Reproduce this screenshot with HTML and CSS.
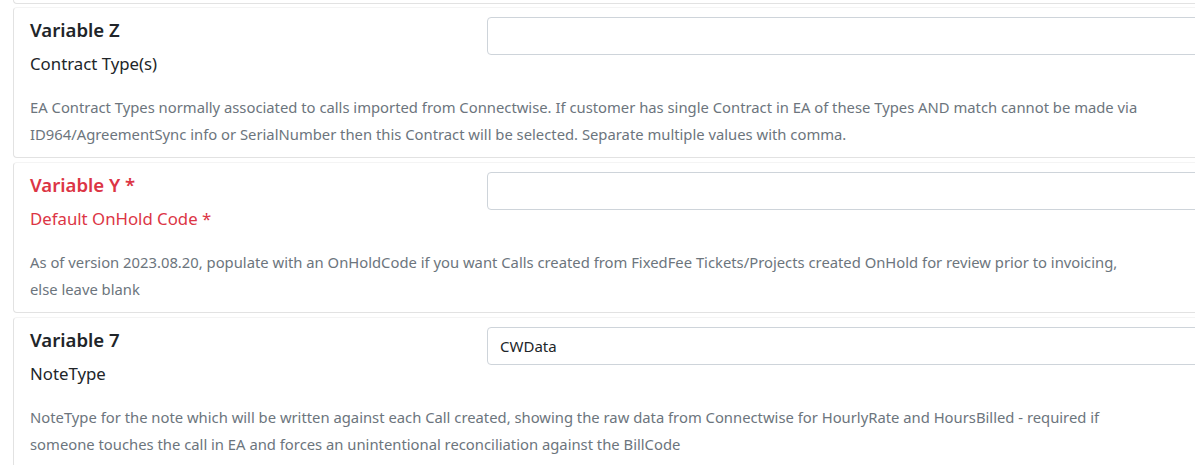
FILE: index.html
```html
<!DOCTYPE html>
<html>
<head>
<meta charset="utf-8">
<link rel="stylesheet" href="styles.css">
</head>
<body>
<div class="page">
  <div class="card card-stub"></div>

  <div class="card">
    <div class="row">
      <div class="label-col">
        <div class="title">Variable Z</div>
        <div class="subtitle">Contract Type(s)</div>
      </div>
      <div class="input-col">
        <input class="field" type="text" value="">
      </div>
    </div>
    <p class="desc">EA Contract Types normally associated to calls imported from Connectwise. If customer has single Contract in EA of these Types AND match cannot be made via ID964/AgreementSync info or SerialNumber then this Contract will be selected. Separate multiple values with comma.</p>
  </div>

  <div class="card required">
    <div class="row">
      <div class="label-col">
        <div class="title">Variable Y *</div>
        <div class="subtitle">Default OnHold Code *</div>
      </div>
      <div class="input-col">
        <input class="field" type="text" value="">
      </div>
    </div>
    <p class="desc">As of version 2023.08.20, populate with an OnHoldCode if you want Calls created from FixedFee Tickets/Projects created OnHold for review prior to invoicing, else leave blank</p>
  </div>

  <div class="card">
    <div class="row">
      <div class="label-col">
        <div class="title">Variable 7</div>
        <div class="subtitle">NoteType</div>
      </div>
      <div class="input-col">
        <input class="field" type="text" value="CWData">
      </div>
    </div>
    <p class="desc">NoteType for the note which will be written against each Call created, showing the raw data from Connectwise for HourlyRate and HoursBilled - required if someone touches the call in EA and forces an unintentional reconciliation against the BillCode</p>
  </div>
</div>
</body>
</html>
```

FILE: styles.css
```css
html, body {
  margin: 0;
  padding: 0;
  background: #ffffff;
  overflow: hidden;
}

body {
  font-family: "Segoe UI", "Noto Sans", "Open Sans", sans-serif;
  color: #212529;
}

.page {
  width: 1240px;
  padding-left: 13px;
  margin-top: -2px;
}

.card {
  border: 1px solid #e2e2e2;
  border-top-color: #f4f4f4;
  border-right: none;
  border-radius: 4px 0 0 4px;
  padding: 9px 0 9px 16px;
  margin-bottom: 4px;
}

.card-stub {
  height: 5px;
  padding: 0;
  border-top: none;
  border-radius: 0 0 0 4px;
  margin-bottom: 3px;
}

.row {
  display: flex;
  align-items: flex-start;
}

.label-col {
  width: 457px;
  flex: none;
  padding-top: 1px;
}

.input-col {
  flex: 1;
}

.title {
  font-size: 18.6px;
  font-weight: 600;
  line-height: 24px;
}

.subtitle {
  font-size: 16.8px;
  line-height: 24px;
  margin-top: 10px;
}

.required .title,
.required .subtitle {
  color: #dc3545;
}

.field {
  display: block;
  box-sizing: border-box;
  width: 100%;
  height: 38px;
  border: 1px solid #ced4da;
  border-radius: 4px;
  padding: 6px 12px;
  font-family: inherit;
  font-size: 15px;
  color: #212529;
  background: #fff;
  outline: none;
}

.desc {
  margin: 18px 0 0 0;
  width: 1116px;
  font-size: 14.8px;
  line-height: 27px;
  color: #6c757d;
}
```
